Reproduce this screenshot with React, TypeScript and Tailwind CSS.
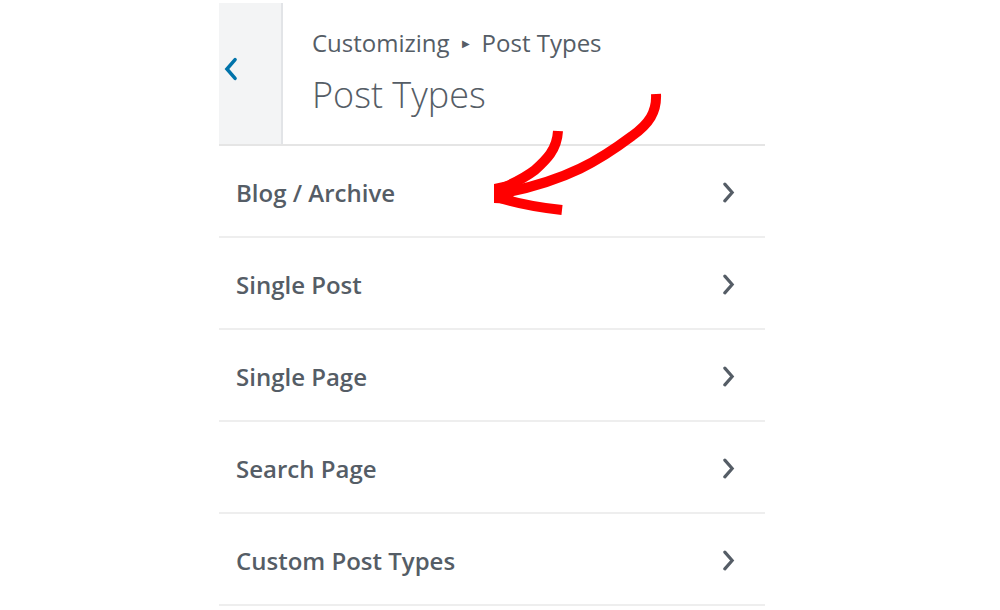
const sections = ["Blog / Archive", "Single Post", "Single Page", "Search Page", "Custom Post Types"];

function Chevron({ dir, className }: { dir: "left" | "right"; className?: string }) {
  return (
    <svg viewBox="0 0 12 20" className={className} fill="none" stroke="currentColor" strokeWidth={3} strokeLinecap="round" strokeLinejoin="miter">
      {dir === "left" ? <path d="M9.5 2 L2.5 10 L9.5 18" /> : <path d="M2.5 2 L9.5 10 L2.5 18" />}
    </svg>
  );
}

export default function App() {
  return (
    <div className="relative h-[610px] w-[1000px] overflow-hidden bg-white" style={{ fontFamily: '"Open Sans", "Noto Sans", sans-serif' }}>
      <div className="ml-[219px] w-[546px] pt-[3px]">
        {/* header */}
        <div className="flex h-[143px] border-b-2 border-[#e5e5e5]">
          <button className="flex w-[64px] items-start border-r-2 border-[#e2e4e7] bg-[#f3f4f5] pl-[5px] pt-[54px] text-[#0073aa]">
            <Chevron dir="left" className="h-[24px] w-[14px]" />
          </button>
          <div className="flex flex-col pl-[29px] pt-[23px] text-[#555d66]">
            <div className="flex items-center text-[24px] leading-[34px]">
              <span>Customizing</span>
              <span className="mx-[12px] text-[10px]">▶</span>
              <span>Post Types</span>
            </div>
            <div className="mt-[13px] text-[36px] font-light leading-[44px]">Post Types</div>
          </div>
        </div>

        {/* section list */}
        <ul>
          {sections.map((s) => (
            <li key={s} className="flex h-[92px] items-center justify-between border-b-2 border-[#eeeeee] pl-[17px] pr-[30px] pt-[3px] text-[#555d66]">
              <span className="text-[24px] font-semibold">{s}</span>
              <Chevron dir="right" className="h-[21px] w-[13px]" />
            </li>
          ))}
        </ul>
      </div>

      {/* hand-drawn annotation arrow */}
      <svg className="pointer-events-none absolute left-0 top-0" width="1000" height="610" viewBox="0 0 1000 610" fill="none" stroke="#ff0000">
        <path d="M656 94 C657 112 649 124 632 136 C600 160 568 180 504 193" strokeWidth={10} />
        <path d="M558 131 C557 150 546 160 535 170 C522 180 510 185 498 190" strokeWidth={10} />
        <path d="M497 197 C515 203 535 207 562 210" strokeWidth={10} />
        <polygon points="494,184 512,180 514,204 494,203" fill="#ff0000" stroke="none" />
      </svg>
    </div>
  );
}
